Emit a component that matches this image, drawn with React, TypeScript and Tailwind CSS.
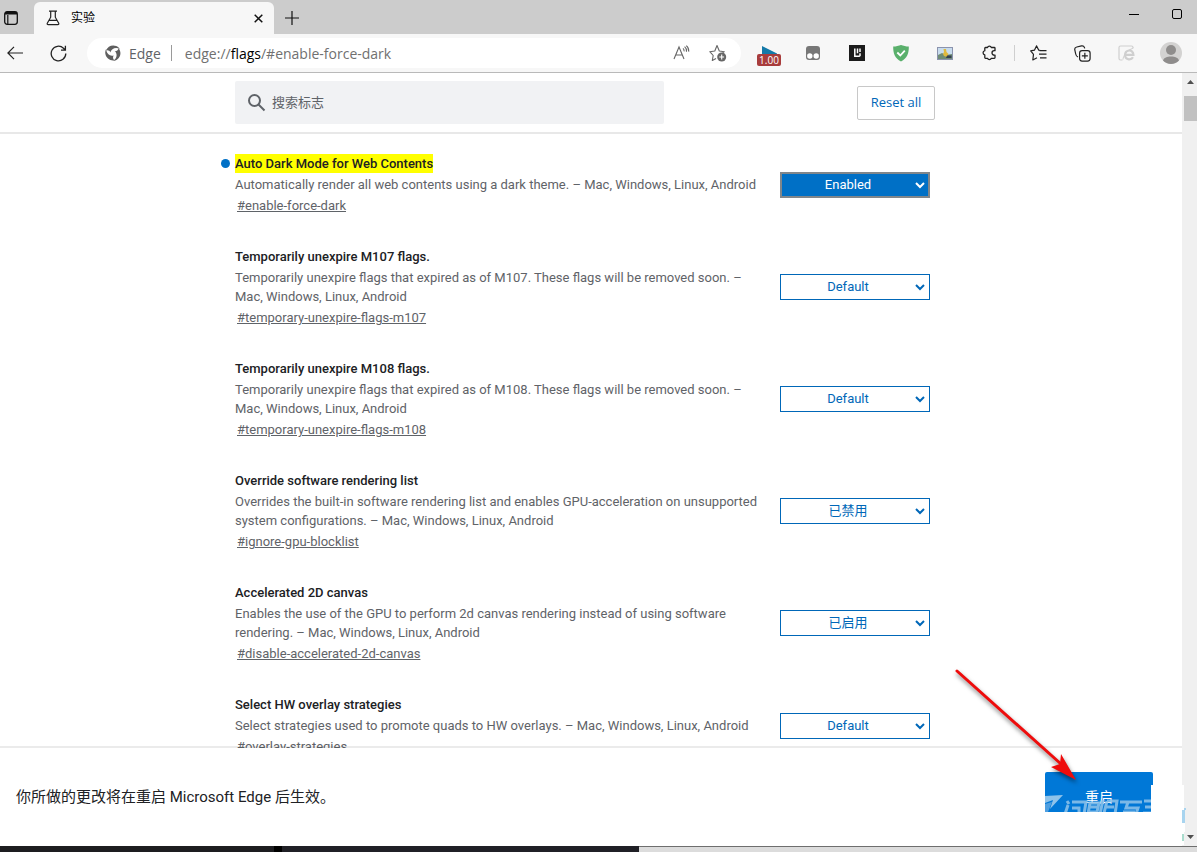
import { ReactNode } from 'react';

interface Flag {
    id: string;
    title: string;
    description: string;
    value: string;
    options: string[];
    changed?: boolean;
}

const FLAGS: Flag[] = [
    {
        id: 'enable-force-dark',
        title: 'Auto Dark Mode for Web Contents',
        description: 'Automatically render all web contents using a dark theme. – Mac, Windows, Linux, Android',
        value: 'Enabled',
        options: ['Default', 'Enabled', 'Disabled'],
        changed: true,
    },
    {
        id: 'temporary-unexpire-flags-m107',
        title: 'Temporarily unexpire M107 flags.',
        description: 'Temporarily unexpire flags that expired as of M107. These flags will be removed soon. – Mac, Windows, Linux, Android',
        value: 'Default',
        options: ['Default', 'Enabled', 'Disabled'],
    },
    {
        id: 'temporary-unexpire-flags-m108',
        title: 'Temporarily unexpire M108 flags.',
        description: 'Temporarily unexpire flags that expired as of M108. These flags will be removed soon. – Mac, Windows, Linux, Android',
        value: 'Default',
        options: ['Default', 'Enabled', 'Disabled'],
    },
    {
        id: 'ignore-gpu-blocklist',
        title: 'Override software rendering list',
        description: 'Overrides the built-in software rendering list and enables GPU-acceleration on unsupported system configurations. – Mac, Windows, Linux, Android',
        value: '已禁用',
        options: ['已禁用', '已启用'],
    },
    {
        id: 'disable-accelerated-2d-canvas',
        title: 'Accelerated 2D canvas',
        description: 'Enables the use of the GPU to perform 2d canvas rendering instead of using software rendering. – Mac, Windows, Linux, Android',
        value: '已启用',
        options: ['已启用', '已禁用'],
    },
    {
        id: 'overlay-strategies',
        title: 'Select HW overlay strategies',
        description: 'Select strategies used to promote quads to HW overlays. – Mac, Windows, Linux, Android',
        value: 'Default',
        options: ['Default', 'None', 'Unoccluded fullscreen buffers'],
    },
];

function IconButton({ label, className = '', children }: { label: string; className?: string; children: ReactNode }) {
    return (
        <button type="button" aria-label={label} className={`flex shrink-0 items-center justify-center ${className}`}>
            {children}
        </button>
    );
}

function TabStrip() {
    return (
        <div className="flex h-[34px] shrink-0 items-end bg-[#cccccc]">
            <IconButton label="Tab actions" className="h-8 w-[34px] pr-3">
                <svg width="14" height="14" viewBox="0 0 14 14" fill="none" stroke="#111" strokeWidth="1.3">
                    <rect x="0.7" y="0.7" width="12.6" height="12.6" rx="2.5" />
                    <path d="M3.8 4v9" strokeWidth="1.2" />
                    <path d="M1 2.2h12" strokeWidth="2.6" />
                </svg>
            </IconButton>
            <div className="flex h-8 w-60 items-center rounded-t-md bg-[#f7f7f7] pl-3 pr-2">
                <svg width="14" height="16" viewBox="0 0 14 16" fill="none" stroke="#222" strokeWidth="1.2" className="shrink-0">
                    <path d="M3 1.2h8M4.7 1.5v5.7L1.3 13.2c-.4.8 0 1.5.9 1.5h9.6c.9 0 1.3-.7.9-1.5L9.3 7.2V1.5M3.3 10.3h7.4" />
                </svg>
                <span className="ml-[11px] flex-1 text-[12px] text-black">实验</span>
                <IconButton label="Close tab" className="size-4">
                    <svg width="9" height="9" viewBox="0 0 9 9" stroke="#111" strokeWidth="1.5">
                        <path d="M.7.7l7.6 7.6M8.3.7L.7 8.3" />
                    </svg>
                </IconButton>
            </div>
            <IconButton label="New tab" className="h-8 w-9">
                <svg width="14" height="14" viewBox="0 0 14 14" stroke="#111" strokeWidth="1.2">
                    <path d="M7 0v14M0 7h14" />
                </svg>
            </IconButton>
            <div className="ml-auto flex h-full items-start">
                <IconButton label="Minimize" className="h-7 w-[46px]">
                    <svg width="10" height="10" viewBox="0 0 10 10" stroke="#000">
                        <path d="M0 5.5h10" />
                    </svg>
                </IconButton>
                <IconButton label="Maximize" className="h-7 w-10">
                    <svg width="10" height="10" viewBox="0 0 10 10" fill="none" stroke="#000">
                        <rect x="0.5" y="0.5" width="9" height="9" rx="1.5" />
                    </svg>
                </IconButton>
            </div>
        </div>
    );
}

// three identical blades turned round the centre
function EdgeMark() {
    const blade = 'M1 5.5C2.6 1.4 7 -.6 11.2 1c1.6.6 2.800 1.700 3.600 3.100C12.400 2.600 9.400 2.700 7.500 4.200 6.300 5.100 5.700 6.200 5.600 7.400 4.800 5.700 3 5 1 5.500z';
    return (
        <svg width="16" height="16" viewBox="0 0 16 16" fill="#5f5f5f" className="shrink-0">
            <path d={blade} />
            <path d={blade} transform="rotate(120 8 8)" />
            <path d={blade} transform="rotate(240 8 8)" />
        </svg>
    );
}

function AddressBar() {
    return (
        <div className="flex h-[30px] min-w-0 flex-1 items-center rounded-full bg-white pr-[13px] pl-[18px]">
            <EdgeMark />
            <span className="ml-2 text-[14px] text-[#5f6368]">Edge</span>
            <span className="ml-2.5 h-4 w-px bg-[#9a9a9a]" />
            <a href="#enable-force-dark" className="ml-[13px] min-w-0 flex-1 truncate text-[14px] text-[#707070]">
                edge://<span className="text-black">flags</span>/#enable-force-dark
            </a>
            <IconButton label="Read aloud" className="size-5">
                <svg width="18" height="16" viewBox="0 0 18 16" fill="none" stroke="#666" strokeWidth="1.1">
                    <path d="M1 14L6 2l5 12M2.7 10h6.6M10 3.4c.9.8 1.2 1.8 1.1 3M11.6 1.7c1.5 1.3 2.1 3 1.9 5M13.3.6c1.8 1.5 2.6 3.6 2.4 6" />
                </svg>
            </IconButton>
            <IconButton label="Add to favorites" className="ml-4 size-5">
                <svg width="18" height="18" viewBox="0 0 18 18" fill="none" stroke="#666" strokeWidth="1.1" strokeLinejoin="round">
                    <path d="M7 14.500L3.300 16.500l.9-5L.8 7.700l5-.7L8 1.500l2.300 5.500 5 .7-1.800 1.500" />
                    <circle cx="12.7" cy="13" r="4.5" fill="#666" stroke="none" />
                    <path d="M12.7 10.6v4.8M10.3 13h4.8" stroke="#fff" />
                </svg>
            </IconButton>
        </div>
    );
}

function Toolbar() {
    return (
        <div className="flex h-[39px] shrink-0 items-center border-b border-[#b9b9b9] bg-[#f7f7f7]">
            <IconButton label="Back" className="w-[30px]">
                <svg width="16" height="14" viewBox="0 0 16 14" fill="none" stroke="#222" strokeWidth="1.2">
                    <path d="M16 7H1M7 .8L.9 7 7 13.2" />
                </svg>
            </IconButton>
            <IconButton label="Refresh" className="w-[57px]">
                <svg width="17" height="17" viewBox="0 0 17 17" fill="none" stroke="#222" strokeWidth="1.3">
                    <path d="M15.8 8.5A7.3 7.3 0 1 1 13.5 3.2L15.2 5M15.4.8v4.4H11" />
                </svg>
            </IconButton>
            <AddressBar />
            <div className="flex w-[456px] shrink-0 items-center pl-1.5">
                <IconButton label="Playback speed" className="w-11 flex-col pt-1.5">
                    <svg width="15" height="8" viewBox="0 0 15 8">
                        <path d="M0 0l15 7.5V8H0z" fill="#1479a8" />
                    </svg>
                    <span className="rounded-xs bg-[#a83c3c] px-0.5 text-[10px] leading-3 text-white">1.00</span>
                </IconButton>
                <IconButton label="Tampermonkey" className="w-11">
                    <svg width="14" height="14" viewBox="0 0 14 14">
                        <rect width="14" height="14" rx="3" fill="#777" />
                        <circle cx="3.8" cy="10" r="2.7" fill="#fff" />
                        <circle cx="10.2" cy="10" r="2.7" fill="#fff" />
                    </svg>
                </IconButton>
                <IconButton label="Reader" className="w-11">
                    <svg width="16" height="16" viewBox="0 0 16 16">
                        <path d="M0 0h16v16H0z" fill="#1b1b1b" />
                        <path d="M5.800 3.500v7.700h5M8.500 3.500v4.800M11 3.500v3.500M11 8.200v3" fill="none" stroke="#fff" strokeWidth="1.500" />
                    </svg>
                </IconButton>
                <IconButton label="AdGuard" className="w-11">
                    <svg width="16" height="17" viewBox="0 0 16 17">
                        <path d="M8 0c2.3.9 5 1.4 7.8 1.6C16 8.500 14 13.500 8 16.500 2 13.500 0 8.500.2 1.600 3 1.400 5.700.900 8 0z" fill="#5ab06c" />
                        <path d="M4.300 7.500l3 3L11.800 5.600" fill="none" stroke="#fff" strokeWidth="1.800" />
                    </svg>
                </IconButton>
                <IconButton label="Image tools" className="w-11">
                    <svg width="16" height="13" viewBox="0 0 16 13">
                        <rect x="0.5" y="0.5" width="15" height="12" fill="#c8dced" stroke="#8b93ae" />
                        <path d="M1 8l4-2 4 2 6-1v5H1z" fill="#6f8c75" />
                        <path d="M6.500 2h2.500l.5 3 2 2-1.500 3-3-1-1-2 1-2z" fill="#e0b93d" />
                        <path d="M10 8.500h4.500V11H9z" fill="#343f4f" />
                    </svg>
                </IconButton>
                <IconButton label="Extensions" className="w-11">
                    <svg width="16" height="16" viewBox="0 0 16 16" fill="none" stroke="#222" strokeWidth="1.300" strokeLinejoin="round">
                        <path d="M4.500 2.500h2a2 2 0 0 1 3.800 0h3c.4 0 .7.300.7.700v2.500h-.800a2 2 0 0 0 0 4.400h.8v2.500c0 .4-.3.700-.7.700h-3a2 2 0 0 1-3.800 0h-2c-.4 0-.7-.3-.7-.7V10a2.200 2.200 0 0 1 0-4.300V3.200c0-.4.3-.7.7-.7z" />
                    </svg>
                </IconButton>
                <span className="ml-[3px] h-4 w-px bg-[#cfcfcf]" />
                <IconButton label="Favorites" className="w-11 pl-0.5">
                    <svg width="17" height="16" viewBox="0 0 17 16" fill="none" stroke="#222" strokeWidth="1.200" strokeLinejoin="round">
                        <path d="M10.500 5.500L8.800 5.200 6.500.900 4.400 5.200l-3.700.700 2.800 3.500-.7 5.600 4.200-2.200M9.500 5.600h7M9 9.200h7.500M10 12.800h6.500" />
                    </svg>
                </IconButton>
                <IconButton label="Collections" className="w-11 pl-0.5">
                    <svg width="17" height="17" viewBox="0 0 17 17" fill="none" stroke="#222" strokeWidth="1.200">
                        <path d="M4 12C2.600 11.500 2 10.500 1.700 9L.8 4.800C.5 3.200 1.400 2.300 2.800 2L7.500.9c1.500-.3 2.500.3 3 1.700l.2.700" />
                        <rect x="5.600" y="5.600" width="10.500" height="10.500" rx="2.500" />
                        <path d="M10.850 7.800v6M7.850 10.850h6" />
                    </svg>
                </IconButton>
                <IconButton label="Internet Explorer mode" className="w-11 pl-0.5">
                    <svg width="17" height="16" viewBox="0 0 17 16" fill="none" stroke="#cfcfcf">
                        <path d="M15 3V2.500C15 1.500 14.500 1 13.500 1h-11C1.500 1 1 1.500 1 2.500v11c0 1 .5 1.500 1.500 1.500h2" strokeWidth="1.200" />
                        <path d="M6.800 9.900h8.600C15.300 6.500 13 5.200 10.800 5.500c-5 .9-5 8.300 0 8.800 2 .2 3.300-.5 4.200-2" strokeWidth="2.200" />
                        <path d="M5 14.500C5 11 9 5 15.500 3" strokeWidth="1" />
                    </svg>
                </IconButton>
                <IconButton label="Profile" className="ml-0.5 w-11">
                    <svg width="22" height="22" viewBox="0 0 22 22">
                        <circle cx="11" cy="11" r="11" fill="#d3d2d1" />
                        <circle cx="11" cy="8" r="5" fill="#8f8d8c" />
                        <path d="M3 18.500C4 15.500 7 14.500 11 14.500s7 1 8 4a11 11 0 0 1-16 0z" fill="#8f8d8c" />
                    </svg>
                </IconButton>
            </div>
        </div>
    );
}

function FlagRow({ flag }: { flag: Flag }) {
    const selectColors = flag.changed
        ? 'border-2 border-[#80868b] bg-[#0070c6] text-white'
        : 'border border-[#0067b8] bg-white text-[#0067b8]';

    return (
        <li className="flex items-center">
            <div className="relative min-w-0 flex-1">
                {flag.changed && <span className="absolute top-[5px] -left-3.5 size-[9px] rounded-full bg-[#0070c6]" />}
                <h2 className="text-[13px] leading-[19px] font-medium text-[#202124]">
                    <label htmlFor={flag.id} className={flag.changed ? 'inline-block bg-[#ffff00]' : ''}>
                        {flag.title}
                    </label>
                </h2>
                <p className="mt-0.5 text-[13px] leading-[19px] text-[#5f6368]">{flag.description}</p>
                <a href={`#${flag.id}`} className="mt-0.5 ml-0.5 block w-fit text-[13px] leading-[19px] text-[#5f6368] underline">
                    #{flag.id}
                </a>
            </div>
            <div className="relative mr-[5px] ml-[22px] w-[150px] shrink-0">
                <select
                    id={flag.id}
                    defaultValue={flag.value}
                    className={`block h-[26px] w-full appearance-none pr-[14px] text-center text-[13px] [text-align-last:center] ${selectColors}`}
                >
                    {flag.options.map(option => (
                        <option key={option}>{option}</option>
                    ))}
                </select>
                <svg
                    width="10"
                    height="7"
                    viewBox="0 0 10 7"
                    fill="none"
                    stroke={flag.changed ? '#fff' : '#0067b8'}
                    strokeWidth="2"
                    className="pointer-events-none absolute top-[10px] right-[5px]"
                >
                    <path d="M1 1l4 4 4-4" />
                </svg>
            </div>
        </li>
    );
}

function Scrollbar() {
    return (
        <div className="flex w-[15px] shrink-0 flex-col items-end bg-[#f0f0f0]">
            <svg width="13" height="23" viewBox="0 0 13 23">
                <path d="M3 11l3.500-4L10 11z" fill="#505050" />
            </svg>
            <div className="h-[25px] w-[13px] bg-[#c1c1c1]" />
            <svg width="13" height="17" viewBox="0 0 13 17" className="mt-auto">
                <path d="M3 6l3.500 4L10 6z" fill="#505050" />
            </svg>
        </div>
    );
}

function RestartBar() {
    return (
        <div className="relative flex h-[98px] shrink-0 items-center justify-between bg-white pr-[29px] pl-4 shadow-[0_-2px_0_rgba(0,0,0,0.08)]">
            <p className="text-[15px] text-[#202124]">你所做的更改将在重启 Microsoft Edge 后生效。</p>
            <div className="relative">
                <button type="button" className="block h-[50px] w-[108px] rounded-xs bg-[#0078d7] text-[14px] text-white">
                    重启
                </button>
                {/* site stamp laid over the button, fades out to a white box below */}
                <svg width="152" height="80" viewBox="0 0 152 80" className="pointer-events-none absolute top-0 left-0" aria-hidden="true">
                    <g fill="none" stroke="#8fc3ea" strokeWidth="3" opacity="0.85">
                        <path d="M20 42l3-9M22 29l2 3M27 30h14l-2 12M27 36h7v6M43 42l2-11h9l-2 9h-9M45 35h8M58 28l-3 14M62 29h10l-2 13M62 29l-3 12M60 35h9M75 30h22M83 30l-2 6h12l-2 6M78 40h12M99 29h8M100 35h7M98 41h9" />
                    </g>
                    <path d="M0 24l18-1L5 37l3-9-8 3z" fill="#8fc3ea" />
                    <path d="M0 32l7-2-4 10H0z" fill="#4f9fe0" />
                    <path d="M0 40h140v20H0zM106 13h33v60h-33z" fill="#fff" />
                    <path d="M137 38h3v13h-3zM139 36h2v2h-2z" fill="#a8d4ef" />
                    <path d="M137 62h2v7h-2z" fill="#a9dccd" />
                </svg>
            </div>
        </div>
    );
}

export default function App() {
    return (
        <div className="relative flex h-screen flex-col overflow-hidden bg-white font-['Open_Sans','Noto_Sans_CJK_SC',sans-serif]">
            <TabStrip />
            <Toolbar />
            <div className="flex min-h-0 flex-1 font-[Roboto,'Noto_Sans_CJK_SC',sans-serif]">
                <div className="flex min-w-0 flex-1 flex-col">
                    <header className="h-[61px] shrink-0 border-b-2 border-[#e8e8e8] pt-2 pr-3">
                        <div className="mx-auto flex w-[700px] max-w-full items-center justify-between">
                            <label className="flex h-[43px] w-[429px] items-center rounded-xs bg-[#f1f2f4] pl-3">
                                <svg width="20" height="20" viewBox="0 0 20 20" fill="none" stroke="#5f6368" strokeWidth="2" className="shrink-0">
                                    <circle cx="7.500" cy="7.500" r="5.500" />
                                    <path d="M11.500 11.500l6 6" />
                                </svg>
                                <input
                                    type="search"
                                    aria-label="搜索标志"
                                    placeholder="搜索标志"
                                    className="ml-[5px] min-w-0 flex-1 bg-transparent text-[13px] outline-none placeholder:text-[#5f6368]"
                                />
                            </label>
                            <button type="button" className="h-[34px] w-[78px] rounded-xs border border-[#c8c8c8] font-['Open_Sans',sans-serif] text-[13px] text-[#0067b8]">
                                Reset all
                            </button>
                        </div>
                    </header>
                    <main className="min-h-0 flex-1 overflow-hidden pt-5 pr-3">
                        <ul className="mx-auto flex w-[700px] max-w-full flex-col gap-8">
                            {FLAGS.map(flag => (
                                <FlagRow key={flag.id} flag={flag} />
                            ))}
                        </ul>
                    </main>
                    <RestartBar />
                </div>
                <Scrollbar />
            </div>
            <div className="flex h-1.5 shrink-0">
                <div className="w-[274px] bg-[#1d1d20]" />
                <div className="w-2 bg-black" />
                <div className="w-[357px] bg-[#202026]" />
                <div className="flex-1 border-t border-[#6e6e6e] bg-[#dcdcdc]" />
            </div>
            {/* pointer from the list to the restart button */}
            <svg width="136" height="126" viewBox="0 0 136 126" className="pointer-events-none absolute right-[113px] bottom-[64px] drop-shadow-[1px_3px_2px_rgba(0,0,0,0.5)]" aria-hidden="true">
                <path d="M9 9l104 93" stroke="#ee0c0c" strokeWidth="3" strokeLinecap="round" />
                <path d="M128 118l-25-13 9-3 1-10z" fill="#ee0c0c" />
            </svg>
        </div>
    );
}
